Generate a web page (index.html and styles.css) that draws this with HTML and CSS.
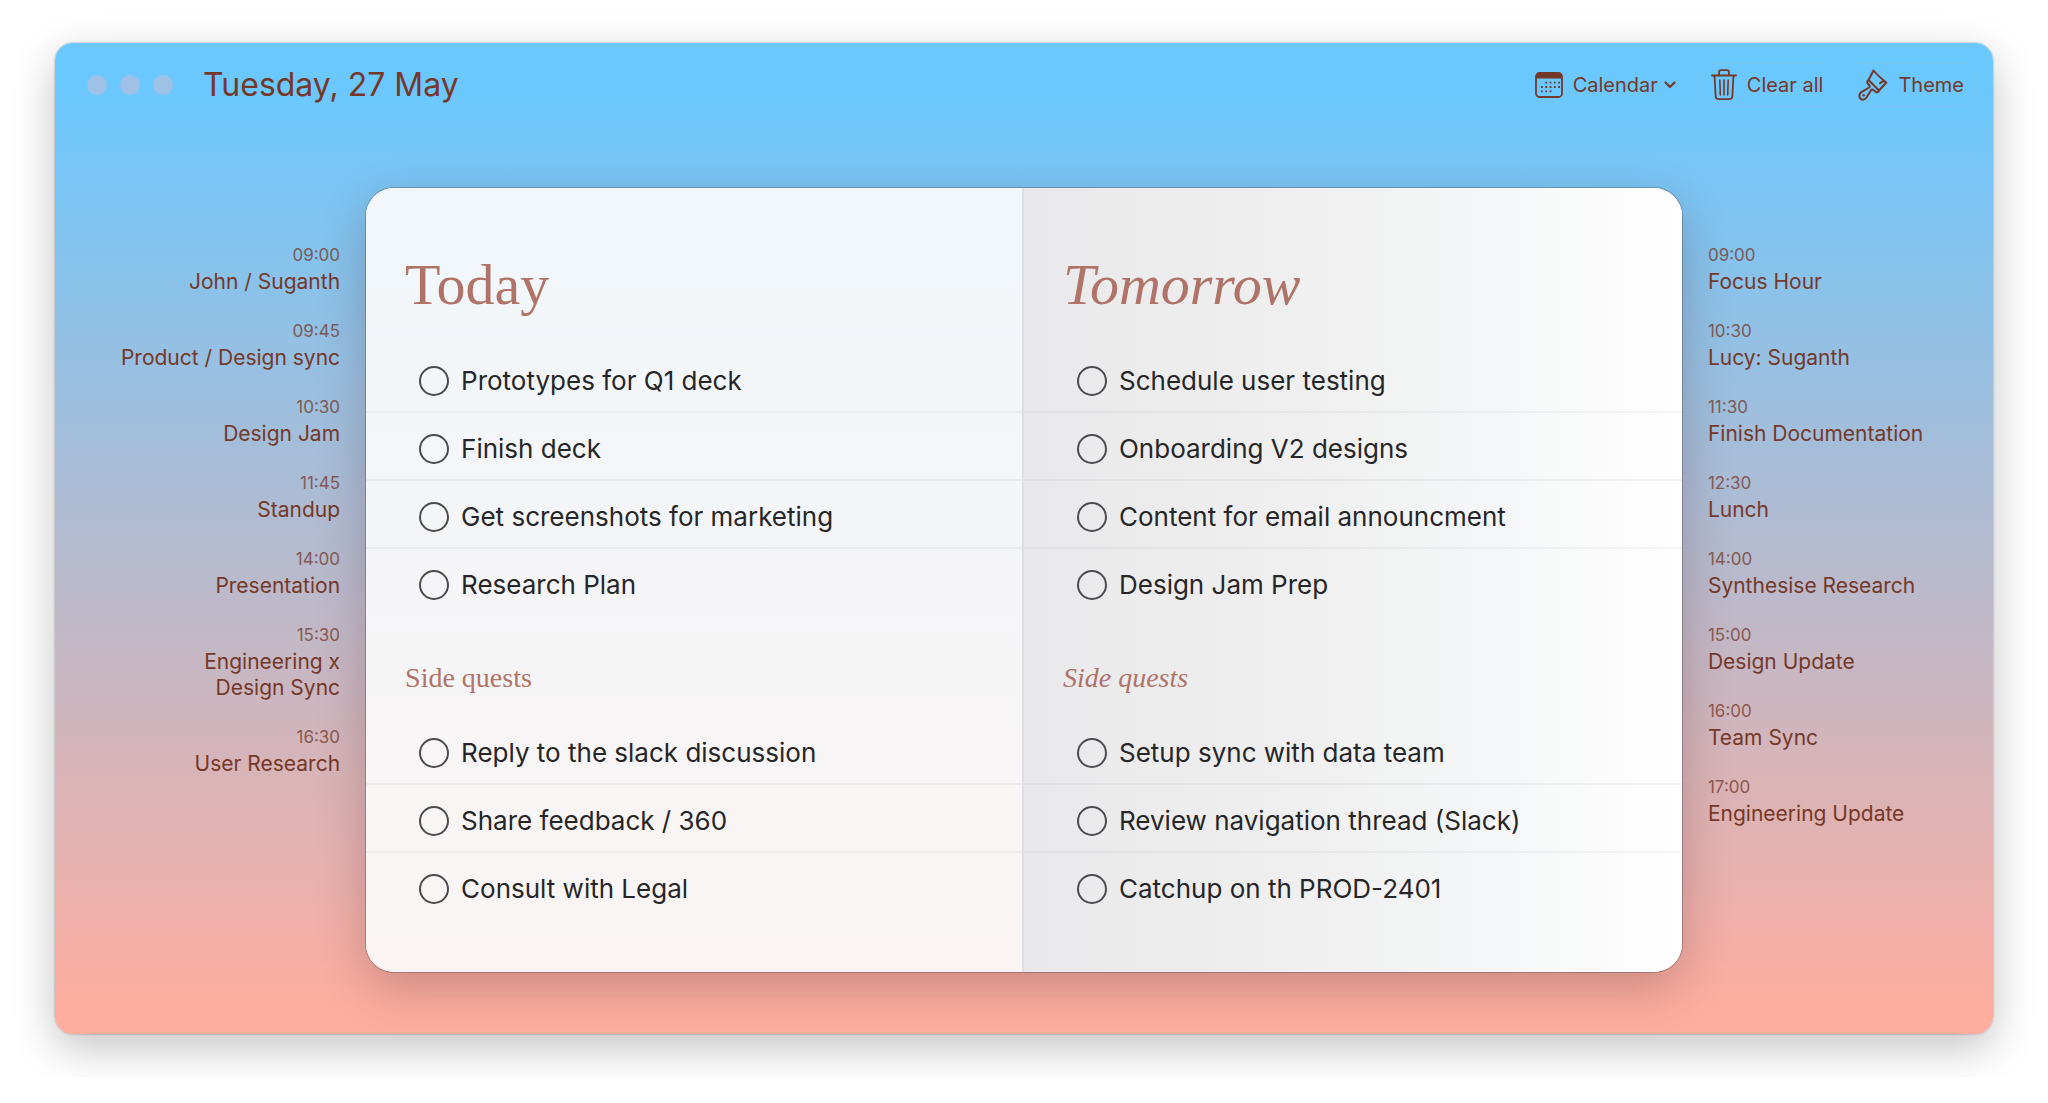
FILE: index.html
```
<!DOCTYPE html>
<html lang="en">
  <head>
    <meta charset="UTF-8" />
    <meta name="viewport" content="width=device-width, initial-scale=1.0" />

    <title>Tuesday, 27 May</title>

    <link rel="stylesheet" href="styles.css">
  </head>

  <body>
    <div class="window">
      <header class="topbar">
        <div class="dots">
          <span class="dot"></span>
          <span class="dot"></span>
          <span class="dot"></span>
        </div>
        <h1 class="date">Tuesday, 27 May</h1>

        <div class="actions">
          <button type="button" class="action" aria-haspopup="menu">
            <svg class="icon" width="28" height="26" viewBox="0 0 28 26" fill="none">
              <rect x="1" y="1" width="26" height="24" rx="3.5" stroke="currentColor" stroke-width="1.8" />
              <path d="M1 6.500V4a3 3 0 0 1 3-3h20a3 3 0 0 1 3 3v2.500z" fill="currentColor" />
              <path d="M10.300 10.700h15M6 15h19M6 19.300h11" stroke="currentColor" stroke-width="1.800" stroke-dasharray="1.800 2.500" />
            </svg>
            Calendar
            <svg class="chevron" width="12" height="8" viewBox="0 0 12 8" fill="none">
              <path d="M1.500 1.500L6 6l4.500-4.500" stroke="currentColor" stroke-width="2.200" stroke-linecap="round" stroke-linejoin="round" />
            </svg>
          </button>

          <button type="button" class="action outlined">
            <svg class="icon" width="26" height="32" viewBox="0 0 26 32" fill="none" stroke="currentColor" stroke-width="1.800" stroke-linecap="round" stroke-linejoin="round">
              <path d="M1 6.500h24M8 6V3.500A2.300 2.300 0 0 1 10.300 1.200h5.400A2.300 2.300 0 0 1 18 3.500V6" />
              <path d="M3.500 7l1.200 20.500a3 3 0 0 0 3 2.700h10.600a3 3 0 0 0 3-2.700L22.500 7" />
              <path d="M8.800 11l.5 15M13 11v15M17.200 11l-.5 15" stroke-width="1.600" />
            </svg>
            Clear all
          </button>

          <button type="button" class="action outlined">
            <svg class="icon" width="30" height="32" viewBox="0 0 30 32" fill="none" stroke="currentColor" stroke-width="2" stroke-linejoin="round" stroke-linecap="round">
              <path d="M15.500 1.500C19.500 6.500 24 10 28.300 13.500L21 21.500L10.500 11z" />
              <path d="M25.800 11.800l-3.800 2.400" />
              <path d="M10.500 11c-1.500 1.200-1.700 2.600-.7 3.700l1.500 1.600c.8.900.7 1.600-.2 2.200l-7.700 4.700c-2.200 1.500-2.600 4.300-1.200 6.200s4.500 1.700 6.100-.6l4.700-7.600c.7-.9 1.500-1 2.300-.2l2.200 1.800c1.300 1.100 2.600.6 3.500-1.300" />
              <circle cx="5.700" cy="26.200" r="1.200" fill="currentColor" stroke="none" />
            </svg>
            Theme
          </button>
        </div>
      </header>

      <main class="planner">
        <ul class="events events-today">
          <li><time>09:00</time><p>John / Suganth</p></li>
          <li><time>09:45</time><p>Product / Design sync</p></li>
          <li><time>10:30</time><p>Design Jam</p></li>
          <li><time>11:45</time><p>Standup</p></li>
          <li><time>14:00</time><p>Presentation</p></li>
          <li><time>15:30</time><p>Engineering x<br />Design Sync</p></li>
          <li><time>16:30</time><p>User Research</p></li>
        </ul>

        <div class="card">
          <section class="page today">
            <h2>Today</h2>
            <ul class="tasks">
              <li><label><input type="checkbox" />Prototypes for Q1 deck</label></li>
              <li><label><input type="checkbox" />Finish deck</label></li>
              <li><label><input type="checkbox" />Get screenshots for marketing</label></li>
              <li><label><input type="checkbox" />Research Plan</label></li>
            </ul>
            <h3>Side quests</h3>
            <ul class="tasks">
              <li><label><input type="checkbox" />Reply to the slack discussion</label></li>
              <li><label><input type="checkbox" />Share feedback / 360</label></li>
              <li><label><input type="checkbox" />Consult with Legal</label></li>
            </ul>
          </section>

          <section class="page tomorrow">
            <h2>Tomorrow</h2>
            <ul class="tasks">
              <li><label><input type="checkbox" />Schedule user testing</label></li>
              <li><label><input type="checkbox" />Onboarding V2 designs</label></li>
              <li><label><input type="checkbox" />Content for email announcment</label></li>
              <li><label><input type="checkbox" />Design Jam Prep</label></li>
            </ul>
            <h3>Side quests</h3>
            <ul class="tasks">
              <li><label><input type="checkbox" />Setup sync with data team</label></li>
              <li><label><input type="checkbox" />Review navigation thread (Slack)</label></li>
              <li><label><input type="checkbox" />Catchup on th PROD-2401</label></li>
            </ul>
          </section>
        </div>

        <ul class="events events-tomorrow">
          <li><time>09:00</time><p>Focus Hour</p></li>
          <li><time>10:30</time><p>Lucy: Suganth</p></li>
          <li><time>11:30</time><p>Finish Documentation</p></li>
          <li><time>12:30</time><p>Lunch</p></li>
          <li><time>14:00</time><p>Synthesise Research</p></li>
          <li><time>15:00</time><p>Design Update</p></li>
          <li><time>16:00</time><p>Team Sync</p></li>
          <li><time>17:00</time><p>Engineering Update</p></li>
        </ul>
      </main>
    </div>
  </body>
</html>
```
FILE: styles.css
```
* {
  box-sizing: border-box;
}

body {
  margin: 0;
  padding: 43px 55px;
  background: #fff;
  color: #743829;
  font-family: Inter, "Liberation Sans", sans-serif;
}

h1,
h2,
h3,
p,
ul {
  margin: 0;
  padding: 0;
  font-weight: 400;
}

ul {
  list-style: none;
}

.window {
  padding-bottom: 62px;
  border-radius: 18px;
  background: linear-gradient(#6ac8ff 4%, #ffad9f 98%);
  box-shadow: 0 0 2px rgba(0, 0, 0, 0.4), 0 14px 44px rgba(0, 0, 0, 0.24);
}

/* Top bar */
.topbar {
  display: flex;
  align-items: center;
  height: 84px;
  padding: 0 18px 0 32px;
}

.dots {
  display: flex;
  gap: 13px;
  margin-right: 30px;
}

.dot {
  width: 20px;
  height: 20px;
  border-radius: 50%;
  background: #9fc1e5;
}

.date {
  font-size: 32px;
  line-height: 40px;
}

.actions {
  display: flex;
  gap: 13px;
  margin-left: auto;
}

.action {
  display: flex;
  align-items: center;
  height: 44px;
  padding: 0 10px;
  border: 1px solid transparent;
  border-radius: 10px;
  background: none;
  color: inherit;
  font-family: inherit;
  font-size: 20px;
  line-height: 26px;
  cursor: pointer;
}

.outlined {
  border-color: rgba(160, 175, 195, 0.2);
}

.icon {
  margin-right: 10px;
}

.chevron {
  margin-left: 6px;
}

/* Events on both sides of the card */
.planner {
  display: grid;
  grid-template-columns: minmax(0, 100fr) minmax(0, 423fr) minmax(0, 100fr);
  padding-top: 61px;
}

.events {
  display: flex;
  flex-direction: column;
  gap: 24px;
  padding: 55px 26px 0;
  font-size: 21px;
  line-height: 26px;
}

.events-today {
  text-align: right;
}

.events time {
  display: block;
  margin-bottom: 2px;
  font-size: 17px;
  line-height: 24px;
  opacity: 0.75;
}

/* Card */
.card {
  display: grid;
  grid-template-columns: 1fr 1fr;
  overflow: hidden;
  border-radius: 28px;
  background: #fff;
  box-shadow: 0 0 0 1px rgba(60, 40, 60, 0.3), 0 16px 48px rgba(60, 20, 20, 0.24);
}

.page {
  padding: 66px 0 51px;
}

.today {
  border-right: 2px solid #dcdee3;
  background: linear-gradient(#f1f7fb, #f5f5f7 50%, #faf5f3);
}

.tomorrow {
  background: linear-gradient(to right, #e9e9eb, #efefef 40%, #f5f6f7 70%, #fff);
}

.page h2,
.page h3 {
  padding-left: 39px;
  color: #b07368;
  font-family: "Liberation Serif", serif;
}

.page h2 {
  margin-bottom: 27px;
  font-size: 58px;
  line-height: 62px;
  padding-bottom: 2px;
}

.page h3 {
  margin: 43px 0 21px;
  font-size: 28px;
  line-height: 36px;
}

.tomorrow h2,
.tomorrow h3 {
  font-style: italic;
}

.tasks li {
  height: 68px;
  padding-top: 6px;
  border-bottom: 2px solid rgba(60, 60, 90, 0.06);
}

.tasks li:last-child {
  border-bottom-color: transparent;
}

.tasks label {
  display: flex;
  align-items: center;
  gap: 12px;
  height: 100%;
  padding-left: 53px;
  color: #262628;
  font-size: 26px;
  line-height: 32px;
}

.tasks input {
  appearance: none;
  width: 30px;
  height: 30px;
  margin: 0;
  border: 2px solid #4c4a4e;
  border-radius: 50%;
}

.tasks input:checked {
  background: #b07368;
}
```
